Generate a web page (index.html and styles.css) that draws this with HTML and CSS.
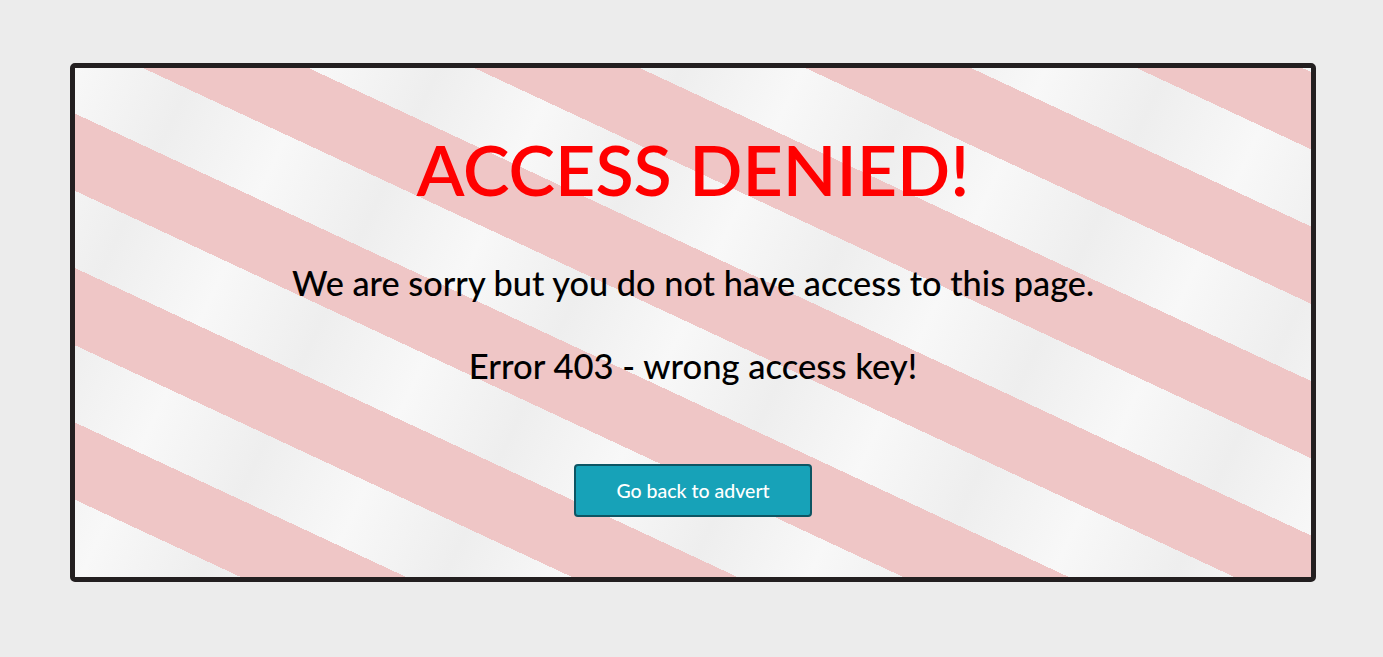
FILE: index.html
```html
<!DOCTYPE html>
<html lang="en">
<head>
<meta charset="utf-8">
<title>Access denied</title>
<link rel="stylesheet" href="styles.css">
</head>
<body>
<main class="card">
  <h1 class="title">ACCESS DENIED!</h1>
  <h2 class="message">We are sorry but you do not have access to this page.</h2>
  <h3 class="error">Error 403 - wrong access key!</h3>
  <a class="back-btn" href="#">Go back to advert</a>
</main>
</body>
</html>
```
FILE: styles.css
```css
html, body {
  margin: 0;
  padding: 0;
}
body {
  background: #ececec;
  font-family: Lato, "Open Sans", sans-serif;
  padding-top: 63px;
}
.card {
  box-sizing: border-box;
  width: 1246px;
  height: 519px;
  margin: 0 auto 0 70px;
  border: 5px solid #231f20;
  border-radius: 5px;
  display: flex;
  flex-direction: column;
  align-items: center;
  padding-top: 59px;
  background:
    repeating-linear-gradient(25deg, transparent 0 70px, #efc6c6 70px 140px),
    repeating-linear-gradient(115deg, #f8f8f8 0, #eeeeee 110px, #f8f8f8 220px);
}
.title {
  margin: 0;
  font-size: 70px;
  line-height: 1.2;
  font-weight: 600;
  color: #ff0000;
}
.message {
  margin: 51px 0 0;
  font-size: 34.3px;
  line-height: 1.2;
  font-weight: 500;
  color: #000;
}
.error {
  margin: 42px 0 0;
  font-size: 34.6px;
  line-height: 1.2;
  font-weight: 500;
  color: #000;
}
.back-btn {
  margin-top: 77px;
  display: block;
  width: 234px;
  box-sizing: content-box;
  padding: 13px 0;
  text-align: center;
  line-height: 23px;
  font-size: 19.5px;
  font-weight: 500;
  color: #fff;
  text-decoration: none;
  background: #17a2b8;
  border: 2px solid #0d5563;
  border-radius: 4px;
}
```
